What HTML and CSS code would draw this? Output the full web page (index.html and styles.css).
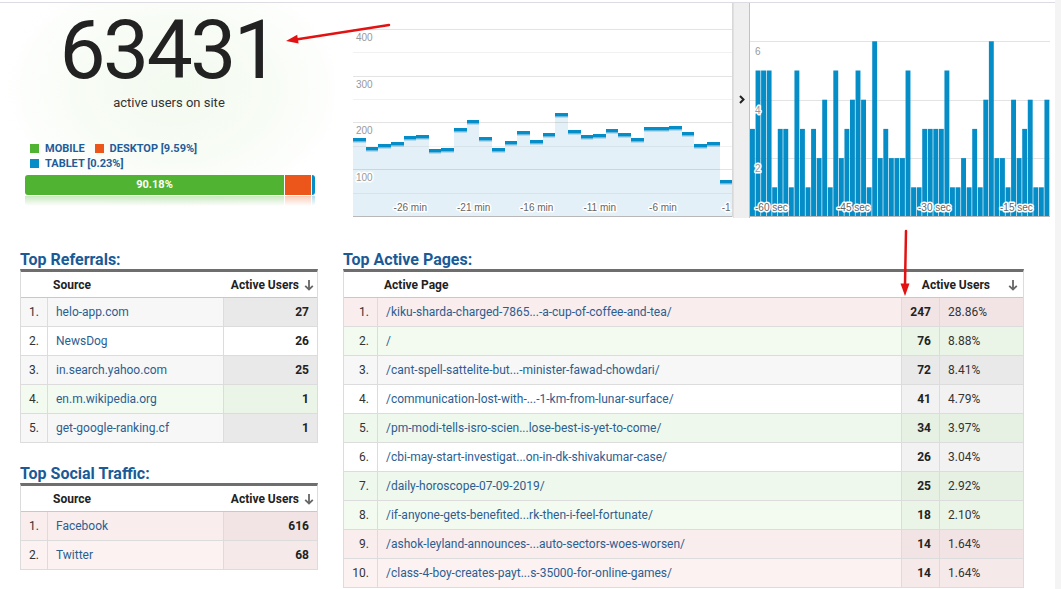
FILE: index.html
```html
<!DOCTYPE html>
<html>
<head>
<meta charset="utf-8">
<title>Real-time overview</title>
<link rel="stylesheet" href="styles.css">
</head>
<body>
<div class="page">
  <div class="main">
    <div class="top">
      <div class="summary">
        <div class="big">63431</div>
        <div class="subtitle">active users on site</div>
        <div class="legend">
          <span class="lg"><i class="sq green"></i>MOBILE</span>
          <span class="lg"><i class="sq orange"></i>DESKTOP [9.59%]</span>
          <span class="lg"><i class="sq blue"></i>TABLET [0.23%]</span>
        </div>
        <div class="devbar">
          <div class="seg green s-mobile">90.18%</div>
          <div class="seg orange s-desktop"></div>
          <div class="seg blue s-tablet"></div>
        </div>
        <div class="devbar reflect">
          <div class="seg green s-mobile"></div>
          <div class="seg orange s-desktop"></div>
          <div class="seg blue s-tablet"></div>
        </div>
      </div>

      <svg class="chart1" width="380" height="215" viewBox="0 0 380 215">
        <path class="area" d="M0 214V135H13V144H25V141H38V139H51V133H63V132H76V146H88V145H101V125H114V117H126V134H139V145H152V138H164V128H177V137H190V130H202V110H215V127H228V132H240V131H253V126H265V130H278V135H291V124H303V124H316V123H329V129H341V141H354V139H367V177H380V214Z"/>
        <path class="band" d="M0 138.5H13v1.5H0z M13 147.5H25v1.5H13z M25 144.5H38v1.5H25z M38 142.5H51v1.5H38z M51 136.5H63v1.5H51z M63 135.5H76v1.5H63z M76 149.5H88v1.5H76z M88 148.5H101v1.5H88z M101 128.5H114v1.5H101z M114 120.5H126v1.5H114z M126 137.5H139v1.5H126z M139 148.5H152v1.5H139z M152 141.5H164v1.5H152z M164 131.5H177v1.5H164z M177 140.5H190v1.5H177z M190 133.5H202v1.5H190z M202 113.5H215v1.5H202z M215 130.5H228v1.5H215z M228 135.5H240v1.5H228z M240 134.5H253v1.5H240z M253 129.5H265v1.5H253z M265 133.5H278v1.5H265z M278 138.5H291v1.5H278z M291 127.5H303v1.5H291z M303 127.5H316v1.5H303z M316 126.5H329v1.5H316z M329 132.5H341v1.5H329z M341 144.5H354v1.5H341z M354 142.5H367v1.5H354z M367 180.5H380v1.5H367z"/>
        <g class="grid-major">
          <line x1="0" y1="26.5" x2="380" y2="26.5"/>
          <line x1="0" y1="73.5" x2="380" y2="73.5"/>
          <line x1="0" y1="119.5" x2="380" y2="119.5"/>
          <line x1="0" y1="166.5" x2="380" y2="166.5"/>
        </g>
        <g class="grid-minor">
          <line x1="0" y1="49.5" x2="380" y2="49.5"/>
          <line x1="0" y1="96.5" x2="380" y2="96.5"/>
          <line x1="0" y1="143.5" x2="380" y2="143.5"/>
          <line x1="0" y1="190.5" x2="380" y2="190.5"/>
        </g>
        <path class="steps" d="M0 135H13v3.5H0z M13 144H25v3.5H13z M25 141H38v3.5H25z M38 139H51v3.5H38z M51 133H63v3.5H51z M63 132H76v3.5H63z M76 146H88v3.5H76z M88 145H101v3.5H88z M101 125H114v3.5H101z M114 117H126v3.5H114z M126 134H139v3.5H126z M139 145H152v3.5H139z M152 138H164v3.5H152z M164 128H177v3.5H164z M177 137H190v3.5H177z M190 130H202v3.5H190z M202 110H215v3.5H202z M215 127H228v3.5H215z M228 132H240v3.5H228z M240 131H253v3.5H240z M253 126H265v3.5H253z M265 130H278v3.5H265z M278 135H291v3.5H278z M291 124H303v3.5H291z M303 124H316v3.5H303z M316 123H329v3.5H316z M329 129H341v3.5H329z M341 141H354v3.5H341z M354 139H367v3.5H354z M367 177H380v3.5H367z"/>
        <line class="axis" x1="0" y1="213.5" x2="380" y2="213.5"/>
        <line class="edge" x1="379.5" y1="0" x2="379.5" y2="214"/>
        <g class="ylab">
          <text x="3" y="37.7">400</text>
          <text x="3" y="85.3">300</text>
          <text x="3" y="131">200</text>
          <text x="3" y="178">100</text>
        </g>
        <g class="xlab">
          <text x="57.3" y="207.7" text-anchor="middle">-26 min</text>
          <text x="120.7" y="207.7" text-anchor="middle">-21 min</text>
          <text x="183.7" y="207.7" text-anchor="middle">-16 min</text>
          <text x="246.7" y="207.7" text-anchor="middle">-11 min</text>
          <text x="310" y="207.7" text-anchor="middle">-6 min</text>
          <text x="368.7" y="207.7">-1</text>
        </g>
      </svg>

      <div class="divider">
        <svg class="chev" width="6" height="9" viewBox="0 0 6 9"><path d="M1 1L4.5 4.5L1 8"/></svg>
      </div>

      <svg class="chart2" width="300" height="215" viewBox="0 0 300 215">
        <g class="grid-major">
          <line x1="0" y1="38.5" x2="300" y2="38.5"/>
          <line x1="0" y1="97.5" x2="300" y2="97.5"/>
          <line x1="0" y1="155.5" x2="300" y2="155.5"/>
        </g>
        <svg x="0" y="0" width="300" height="214" viewBox="0 0 54 214" preserveAspectRatio="none" class="bars">
          <defs>
            <rect id="b1" y="184.3" width=".88" height="29.7"/>
            <rect id="b2" y="155.1" width=".88" height="58.9"/>
            <rect id="b3" y="125.9" width=".88" height="88.1"/>
            <rect id="b4" y="96.7" width=".88" height="117.3"/>
            <rect id="b5" y="67.5" width=".88" height="146.5"/>
            <rect id="b6" y="38.3" width=".88" height="175.7"/>
          </defs>
          <use href="#b3" x="0"/><use href="#b5" x="1"/><use href="#b5" x="2"/><use href="#b5" x="3"/><use href="#b1" x="4"/>
          <use href="#b3" x="5"/><use href="#b3" x="6"/><use href="#b1" x="7"/><use href="#b5" x="8"/><use href="#b3" x="9"/>
          <use href="#b1" x="10"/><use href="#b3" x="11"/><use href="#b2" x="12"/><use href="#b4" x="13"/><use href="#b1" x="14"/>
          <use href="#b5" x="15"/><use href="#b2" x="16"/><use href="#b3" x="17"/><use href="#b4" x="18"/><use href="#b5" x="19"/>
          <use href="#b4" x="20"/><use href="#b1" x="21"/><use href="#b6" x="22"/><use href="#b2" x="23"/><use href="#b3" x="24"/>
          <use href="#b2" x="25"/><use href="#b2" x="26"/><use href="#b2" x="27"/><use href="#b5" x="28"/><use href="#b1" x="29"/>
          <use href="#b1" x="30"/><use href="#b3" x="31"/><use href="#b3" x="32"/><use href="#b3" x="33"/><use href="#b3" x="34"/>
          <use href="#b5" x="35"/><use href="#b1" x="36"/><use href="#b1" x="37"/><use href="#b2" x="38"/><use href="#b1" x="39"/>
          <use href="#b3" x="40"/><use href="#b1" x="41"/><use href="#b4" x="42"/><use href="#b6" x="43"/><use href="#b2" x="44"/>
          <use href="#b2" x="45"/><use href="#b1" x="46"/><use href="#b4" x="47"/><use href="#b2" x="48"/><use href="#b3" x="49"/>
          <use href="#b4" x="50"/><use href="#b1" x="51"/><use href="#b1" x="52"/><use href="#b4" x="53"/>
        </svg>
        <line class="axis" x1="0" y1="213.5" x2="300" y2="213.5"/>
        <g class="ylab">
          <text x="5" y="52">6</text>
          <text x="5" y="111.3">4</text>
          <text x="5" y="169.3">2</text>
        </g>
        <g class="xlab">
          <text x="5" y="208">-60 sec</text>
          <text x="87" y="208">-45 sec</text>
          <text x="168" y="208">-30 sec</text>
          <text x="250" y="208">-15 sec</text>
        </g>
      </svg>
    </div>

    <div class="bottom">
      <div class="col-left">
        <h3 class="heading">Top Referrals:</h3>
        <div class="tbl ref">
          <div class="thead">
            <div class="hc"></div>
            <div class="hc src">Source</div>
            <div class="hc users">Active Users<svg class="sort" width="10" height="12" viewBox="0 0 10 12"><path d="M5 1V10.5M1.2 6.8L5 10.6L8.8 6.8"/></svg></div>
          </div>
          <div class="row grey"><div class="cell num">1.</div><div class="cell link">helo-app.com</div><div class="cell val v">27</div></div>
          <div class="row white"><div class="cell num">2.</div><div class="cell link">NewsDog</div><div class="cell val v">26</div></div>
          <div class="row grey"><div class="cell num">3.</div><div class="cell link">in.search.yahoo.com</div><div class="cell val v">25</div></div>
          <div class="row up"><div class="cell num">4.</div><div class="cell link">en.m.wikipedia.org</div><div class="cell val v">1</div></div>
          <div class="row grey"><div class="cell num">5.</div><div class="cell link">get-google-ranking.cf</div><div class="cell val v">1</div></div>
        </div>

        <h3 class="heading social-h">Top Social Traffic:</h3>
        <div class="tbl ref">
          <div class="thead">
            <div class="hc"></div>
            <div class="hc src">Source</div>
            <div class="hc users">Active Users<svg class="sort" width="10" height="12" viewBox="0 0 10 12"><path d="M5 1V10.5M1.2 6.8L5 10.6L8.8 6.8"/></svg></div>
          </div>
          <div class="row down"><div class="cell num">1.</div><div class="cell link">Facebook</div><div class="cell val v">616</div></div>
          <div class="row down2"><div class="cell num">2.</div><div class="cell link">Twitter</div><div class="cell val v">68</div></div>
        </div>
      </div>

      <div class="col-right">
        <h3 class="heading">Top Active Pages:</h3>
        <div class="tbl pages">
          <div class="thead">
            <div class="hc"></div>
            <div class="hc pg">Active Page</div>
            <div class="hc users wide">Active Users<svg class="sort far" width="10" height="12" viewBox="0 0 10 12"><path d="M5 1V10.5M1.2 6.8L5 10.6L8.8 6.8"/></svg></div>
          </div>
          <div class="row down"><div class="cell num">1.</div><div class="cell link">/kiku-sharda-charged-7865...-a-cup-of-coffee-and-tea/</div><div class="cell val v">247</div><div class="cell pct v">28.86%</div></div>
          <div class="row up"><div class="cell num">2.</div><div class="cell link">/</div><div class="cell val v">76</div><div class="cell pct v">8.88%</div></div>
          <div class="row grey"><div class="cell num">3.</div><div class="cell link">/cant-spell-sattelite-but...-minister-fawad-chowdari/</div><div class="cell val v">72</div><div class="cell pct v">8.41%</div></div>
          <div class="row white2"><div class="cell num">4.</div><div class="cell link">/communication-lost-with-...-1-km-from-lunar-surface/</div><div class="cell val v">41</div><div class="cell pct v">4.79%</div></div>
          <div class="row up2"><div class="cell num">5.</div><div class="cell link">/pm-modi-tells-isro-scien...lose-best-is-yet-to-come/</div><div class="cell val v">34</div><div class="cell pct v">3.97%</div></div>
          <div class="row white2"><div class="cell num">6.</div><div class="cell link">/cbi-may-start-investigat...on-in-dk-shivakumar-case/</div><div class="cell val v">26</div><div class="cell pct v">3.04%</div></div>
          <div class="row up2"><div class="cell num">7.</div><div class="cell link">/daily-horoscope-07-09-2019/</div><div class="cell val v">25</div><div class="cell pct v">2.92%</div></div>
          <div class="row up"><div class="cell num">8.</div><div class="cell link">/if-anyone-gets-benefited...rk-then-i-feel-fortunate/</div><div class="cell val v">18</div><div class="cell pct v">2.10%</div></div>
          <div class="row down"><div class="cell num">9.</div><div class="cell link">/ashok-leyland-announces-...auto-sectors-woes-worsen/</div><div class="cell val v">14</div><div class="cell pct v">1.64%</div></div>
          <div class="row down2"><div class="cell num">10.</div><div class="cell link">/class-4-boy-creates-payt...s-35000-for-online-games/</div><div class="cell val v">14</div><div class="cell pct v">1.64%</div></div>
        </div>
      </div>
    </div>
  </div>
  <div class="rail"></div>
</div>

<svg class="annot" width="1061" height="589" viewBox="0 0 1061 589">
  <line x1="389" y1="25" x2="296" y2="39.5"/>
  <polygon points="286,41 298.6,43.6 297.2,34.8"/>
  <line x1="906" y1="231" x2="905" y2="285"/>
  <polygon points="905,296 900.5,283.5 909.5,283.5"/>
</svg>
</body>
</html>
```

FILE: styles.css
```css
* { box-sizing: border-box; }
html, body { margin: 0; padding: 0; background: #fff; }
body {
  font-family: Roboto, "Liberation Sans", Arial, sans-serif;
  color: #222;
  position: relative;
  width: 1061px;
  height: 589px;
  overflow: hidden;
}
.page { display: flex; height: 589px; }
.main { flex: 1; min-width: 0; }
.rail { width: 6px; background: #f4f4f4; }

/* ---------- top area ---------- */
.top {
  margin-top: 2px;
  border-top: 1px solid #dcdce2;
  height: 216px;
  display: flex;
}
.summary {
  width: 335px;
  flex: none;
  padding: 6px 0 0 25px;
  background: radial-gradient(ellipse 175px 125px at 52% 40%, #f3faef 0%, rgba(243,250,239,0.6) 55%, rgba(255,255,255,0) 100%);
}
.big {
  margin-left: -25px;
  font-size: 82px;
  line-height: 82px;
  letter-spacing: -2.5px;
  text-align: center;
  color: #222;
  text-indent: 2px;
}
.subtitle {
  margin: 4px 0 0 -25px;
  font-size: 13px;
  line-height: 16px;
  text-align: center;
  color: #333;
  text-indent: 3px;
}
.legend {
  margin: 30px 0 0 5px;
  width: 200px;
  display: flex;
  flex-wrap: wrap;
  font-size: 11px;
  line-height: 15px;
  font-weight: 700;
  color: #1f5c99;
}
.lg { display: inline-flex; align-items: center; gap: 6px; margin-right: 10px; }
.sq { display: inline-block; width: 9px; height: 9px; }
.green { background: #50b432; }
.orange { background: #ed561b; }
.blue { background: #058dc7; }

.devbar {
  margin-top: 4px;
  width: 290px;
  height: 20px;
  display: flex;
  border-radius: 3px;
  overflow: hidden;
}
.seg { height: 100%; }
.s-mobile {
  width: 259px;
  color: #fff;
  font-size: 11px;
  font-weight: 700;
  line-height: 20px;
  text-align: center;
}
.s-desktop { width: 27px; border-left: 1px solid #fff; }
.s-tablet { flex: 1; border-left: 1px solid #fff; }
.devbar.reflect {
  margin-top: 1px;
  height: 10px;
  border-radius: 0 0 3px 3px;
  -webkit-mask-image: linear-gradient(to bottom, rgba(0,0,0,0.3), rgba(0,0,0,0));
  mask-image: linear-gradient(to bottom, rgba(0,0,0,0.3), rgba(0,0,0,0));
}

.chart1 { margin-left: 18px; display: block; flex: none; }
.chart2 { display: block; flex: none; }
.area { fill: #e4f0f7; }
.band { fill: #b4d8ec; }
.steps { fill: #058dc7; }
.grid-major line { stroke: #000; stroke-opacity: 0.11; stroke-width: 1; }
.grid-minor line { stroke: #000; stroke-opacity: 0.055; stroke-width: 1; }
.axis { stroke: #b8b8b8; stroke-width: 1; }
.edge { stroke: #d8d8d8; stroke-width: 1; }
.bars use { fill: #058dc7; }
.ylab text, .xlab text {
  font-family: "Liberation Sans", Arial, sans-serif;
  font-size: 10px;
  stroke: #fff;
  stroke-width: 3px;
  stroke-linejoin: round;
  paint-order: stroke;
}
.ylab text { fill: #999; }
.xlab text { fill: #666; }

.divider {
  width: 17px;
  flex: none;
  background: #efefef;
  border-left: 1px solid #e0e0e0;
  border-right: 1px solid #c2c2c2;
  display: flex;
  justify-content: center;
  padding-top: 92px;
}
.chev path { fill: none; stroke: #222; stroke-width: 2; }

/* ---------- bottom area ---------- */
.bottom {
  display: flex;
  gap: 25px;
  padding-left: 20px;
  margin-top: 32px;
}
.col-left { width: 298px; }
.col-right { width: 681px; }
.heading {
  margin: 0;
  font-size: 16px;
  line-height: 19px;
  font-weight: 700;
  color: #1a5a96;
}
.social-h { margin-top: 21px; }

.tbl {
  border-top: 3px solid #6e6e6e;
  border-left: 1px solid #dcdcdc;
  border-right: 1px solid #dcdcdc;
  font-size: 12px;
}
.ref .thead, .ref .row { grid-template-columns: 27px 176px 1fr; }
.pages .thead, .pages .row { grid-template-columns: 34px 524px 38px 1fr; }

.thead {
  display: grid;
  height: 26px;
  border-bottom: 1px solid #c8c8c8;
  background: #fff;
  font-weight: 700;
  color: #222;
}
.hc { display: flex; align-items: center; white-space: nowrap; }
.hc.src { padding-left: 5px; }
.hc.pg { padding-left: 6px; }
.hc.users { justify-content: flex-end; padding-right: 3px; }
.hc.wide { grid-column: 3 / 5; padding-right: 5px; }
.sort { margin-left: 5px; display: block; }
.sort.far { margin-left: 18px; }
.sort path { fill: none; stroke: #666; stroke-width: 1.8; }

.row {
  display: grid;
  height: 29px;
  border-bottom: 1px solid #dcdcdc;
}
.cell {
  display: flex;
  align-items: center;
  white-space: nowrap;
  overflow: hidden;
  border-right: 1px solid #dcdcdc;
  padding: 0 8px;
}
.cell:last-child { border-right: none; }
.num { justify-content: flex-end; color: #333; }
.link { color: #2b5e91; }
.val { justify-content: flex-end; font-weight: 700; color: #222; }
.pct { color: #333; padding-left: 8px; }

.row.grey .cell { background: #f7f7f7; }
.row.grey .v { background: #e9e9e9; }
.row.white .cell { background: #fff; }
.row.white2 .cell { background: #fff; }
.row.white2 .v { background: #f2f2f2; }
.row.up .cell { background: #f3fbf1; }
.row.up .v { background: #eaf5e8; }
.row.up2 .cell { background: #eff8ed; }
.row.up2 .v { background: #e6f1e4; }
.row.down .cell { background: #f9eded; }
.row.down .v { background: #f2e4e4; }
.row.down2 .cell { background: #fcf2f1; }
.row.down2 .v { background: #f5e9e9; }

/* ---------- annotations ---------- */
.annot {
  position: absolute;
  left: 0;
  top: 0;
  pointer-events: none;
}
.annot line { stroke: #e31212; stroke-width: 2.5; stroke-linecap: round; }
.annot polygon { fill: #e31212; }
```
